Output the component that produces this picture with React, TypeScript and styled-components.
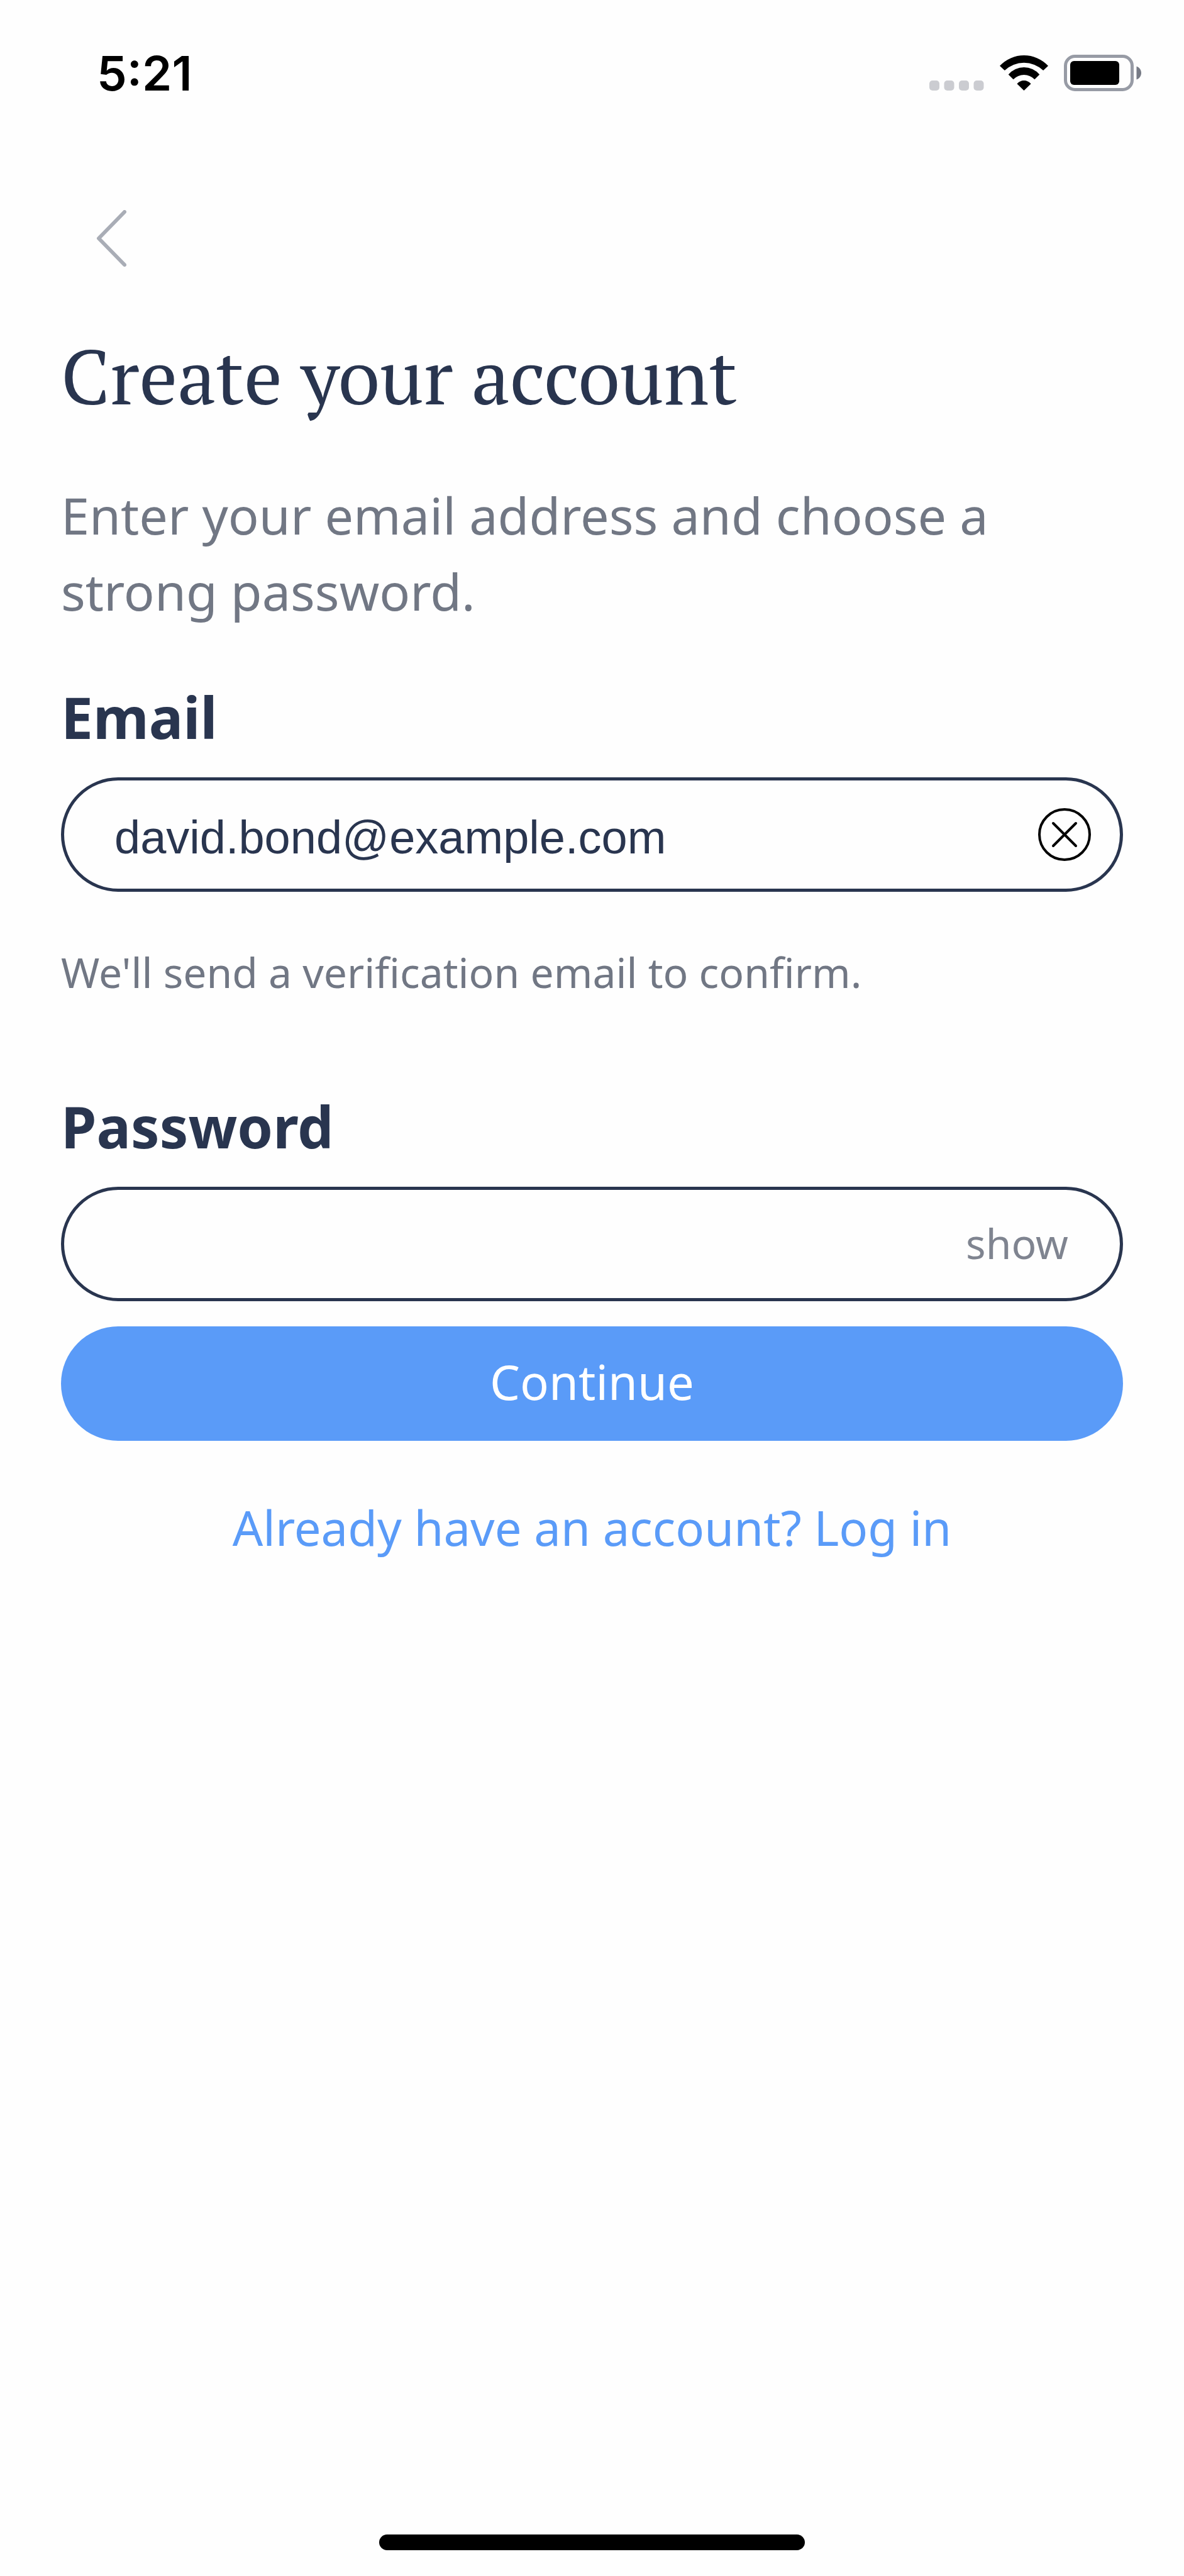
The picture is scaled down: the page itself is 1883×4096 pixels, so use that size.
import React, {useState} from "react";
import styled, {createGlobalStyle} from "styled-components";

const colors = {
    navy: "#29354f",
    grey: "#717784",
    lightGrey: "#7f8490",
    blue: "#5a9bf8",
}

const App: React.FC = () => {

    const [email, setEmail] = useState("david.bond@example.com")
    const [password, setPassword] = useState("")
    const [isVisible, setIsVisible] = useState(false)

    const submitHandler = (e: React.FormEvent) => {
        e.preventDefault()
    }

    return (
        <>
            <GlobalStyle/>
            <Screen>
                <StatusBar>
                    <Time>5:21</Time>
                    <StatusIcons>
                        <SignalIcon/>
                        <WifiIcon/>
                        <BatteryIcon/>
                    </StatusIcons>
                </StatusBar>
                <Content>
                    <BackButton type="button" aria-label="Back">
                        <svg width="48" height="90" viewBox="0 0 48 90" fill="none">
                            <path d="M45 3L4 45L45 87" stroke="#a9adb6" strokeWidth="6"
                                  strokeLinecap="round" strokeLinejoin="round"/>
                        </svg>
                    </BackButton>
                    <Title>Create your account</Title>
                    <Description>Enter your email address and choose a strong password.</Description>
                    <form onSubmit={submitHandler}>
                        <Label htmlFor="email">Email</Label>
                        <Field>
                            <TextInput id="email" type="email" value={email}
                                       onChange={e => setEmail(e.target.value)}/>
                            <ClearButton type="button" aria-label="Clear email" onClick={() => setEmail("")}>
                                <svg width="84" height="84" viewBox="0 0 84 84" fill="none"
                                     stroke="#000" strokeWidth="4" strokeLinecap="round">
                                    <circle cx="42" cy="42" r="40"/>
                                    <path d="M24 24L60 60M60 24L24 60"/>
                                </svg>
                            </ClearButton>
                        </Field>
                        <Hint>We'll send a verification email to confirm.</Hint>
                        <Label htmlFor="password">Password</Label>
                        <Field>
                            <TextInput id="password" type={isVisible ? "text" : "password"} value={password}
                                       onChange={e => setPassword(e.target.value)}/>
                            <ShowButton type="button" onClick={() => setIsVisible(!isVisible)}>
                                {isVisible ? "hide" : "show"}
                            </ShowButton>
                        </Field>
                        <SubmitButton type="submit">Continue</SubmitButton>
                    </form>
                    <LoginLink href="#login">Already have an account? Log in</LoginLink>
                </Content>
                <HomeIndicator/>
            </Screen>
        </>
    );
}

const SignalIcon: React.FC = () => (
    <svg width="87" height="56" viewBox="0 0 87 56" fill="#cbccd1">
        {[0, 23.5, 47, 70.5].map(x => <rect key={x} x={x} y="40" width="16" height="16" rx="5"/>)}
    </svg>
)

const WifiIcon: React.FC = () => (
    <svg width="77" height="56" viewBox="0 0 78.6 57" fill="#000">
        <path d="M0 17A54 54 0 0 1 78.6 17L70.6 24.5A45.4 45.4 0 0 0 8 24.5Z"/>
        <path d="M14 31A33.2 33.2 0 0 1 64.6 31L56.6 39A24.1 24.1 0 0 0 22 39Z"/>
        <path d="M28 46A15 15 0 0 1 50.6 46L39.3 57Z"/>
    </svg>
)

const BatteryIcon: React.FC = () => (
    <svg width="123" height="58" viewBox="0 0 123 58">
        <rect x="2.5" y="2.5" width="106" height="53" rx="15" fill="none" stroke="#979ba5" strokeWidth="5"/>
        <rect x="10" y="10" width="78" height="38" rx="6" fill="#000"/>
        <path d="M115.5 18.5C120 20 123 24 123 29C123 34 120 38 115.5 39.5Z" fill="#777b86"/>
    </svg>
)

export default App;

const GlobalStyle = createGlobalStyle`
  * {
    box-sizing: border-box;
  }

  body {
    margin: 0;
    background: #fefefe;
    font-family: "Noto Sans", sans-serif;
  }

  svg {
    display: block;
  }
`
const Screen = styled.div`
  display: flex;
  flex-direction: column;
  min-height: 100vh;
  padding-bottom: 41px;
`
const StatusBar = styled.header`
  display: flex;
  align-items: center;
  justify-content: space-between;
  padding: 71px 68px 0 154px;
`
const Time = styled.span`
  font-family: Inter, sans-serif;
  font-size: 76px;
  font-weight: 600;
  line-height: 90px;
  color: #000;
`
const StatusIcons = styled.div`
  display: flex;
  align-items: center;
  gap: 25px;
`
const Content = styled.main`
  display: flex;
  flex-direction: column;
  padding: 173px 97px 0;
`
const BackButton = styled.button`
  align-self: flex-start;
  margin: 0 0 94px 56px;
  padding: 0;
  border: none;
  background: none;
`
const Title = styled.h1`
  margin: 0 0 80px;
  font-family: "PT Serif", "Liberation Serif", serif;
  font-size: 121px;
  font-weight: 400;
  line-height: 160px;
  color: ${colors.navy};
`
const Description = styled.p`
  margin: 0 0 80px;
  font-size: 81px;
  line-height: 121px;
  color: ${colors.grey};
`
const Label = styled.label`
  display: block;
  margin-bottom: 36px;
  font-size: 91px;
  font-weight: 700;
  line-height: 120px;
  color: ${colors.navy};
`
const Field = styled.div`
  display: flex;
  align-items: center;
  height: 182px;
  padding: 0 46px 0 80px;
  border: 5px solid ${colors.navy};
  border-radius: 91px;
`
const TextInput = styled.input`
  flex: 1;
  min-width: 0;
  height: 100%;
  padding: 8px 0 0;
  border: none;
  outline: none;
  background: none;
  font-family: "Liberation Sans", sans-serif;
  font-size: 74px;
  color: ${colors.navy};
`
const ClearButton = styled.button`
  padding: 0;
  border: none;
  background: none;
`
const ShowButton = styled.button`
  padding: 0 36px 4px 0;
  border: none;
  background: none;
  font-family: inherit;
  font-size: 66px;
  line-height: 90px;
  color: ${colors.lightGrey};
`
const Hint = styled.p`
  margin: 82px 0 141px;
  font-size: 66px;
  line-height: 90px;
  color: ${colors.grey};
`
const SubmitButton = styled.button`
  width: 100%;
  height: 182px;
  margin-top: 40px;
  padding: 0 0 8px;
  border: none;
  border-radius: 91px;
  background: ${colors.blue};
  font-family: inherit;
  font-size: 76px;
  color: #fff;
`
const LoginLink = styled.a`
  align-self: center;
  margin-top: 86px;
  font-size: 76px;
  line-height: 104px;
  color: ${colors.blue};
  text-decoration: none;
`
const HomeIndicator = styled.div`
  width: 36%;
  height: 25px;
  margin: auto auto 0;
  border-radius: 13px;
  background: #000;
`
